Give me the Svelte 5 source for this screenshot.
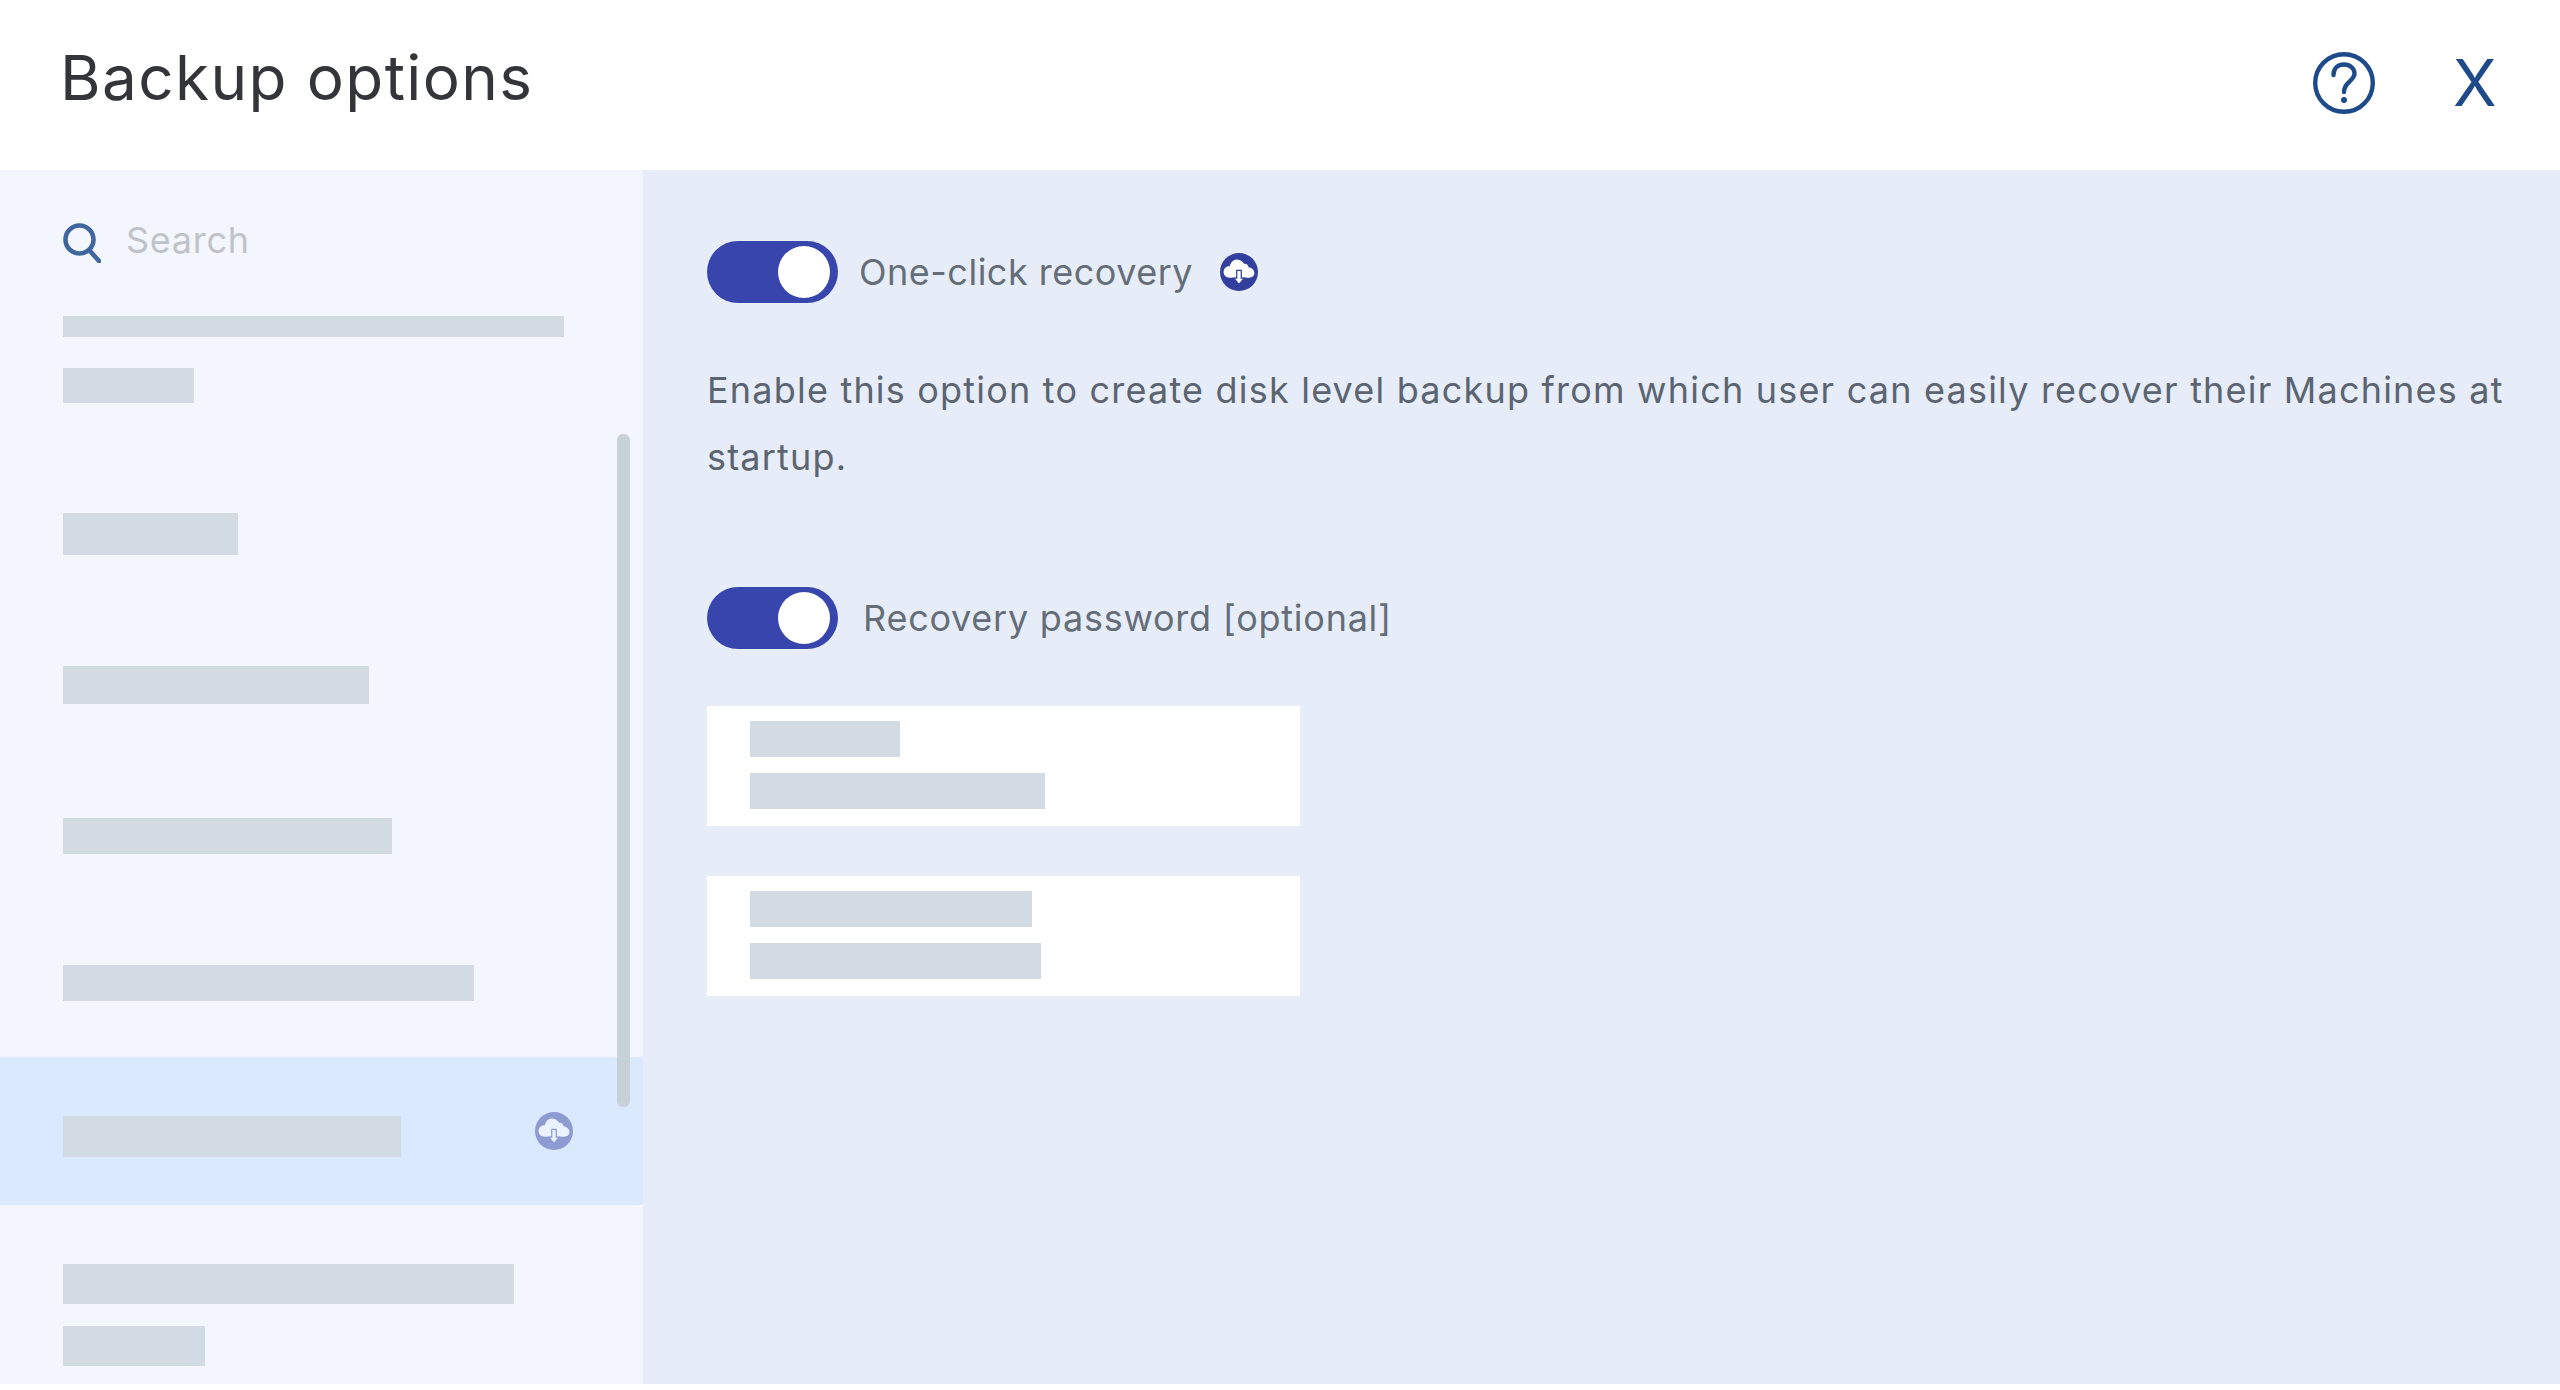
<script>
  const rows = [
    { pt: 0, bars: [{ w: 501, h: 21 }, { w: 131, h: 35 }] },
    { pt: 110, bars: [{ w: 175, h: 42 }] },
    { pt: 111, bars: [{ w: 306, h: 38 }] },
    { pt: 114, bars: [{ w: 329, h: 36 }] },
    { pt: 111, bars: [{ w: 411, h: 36 }] }
  ];

  const cards = [
    [{ w: 150, h: 36 }, { w: 295, h: 36 }],
    [{ w: 282, h: 36 }, { w: 291, h: 36 }]
  ];
</script>

{#snippet cloud()}
  <svg class="cloud" viewBox="0 0 37 37" aria-hidden="true">
    <circle cx="18.5" cy="18.5" r="18.5" fill="#323f9f" />
    <path d="M9.5 24C6 24 3.5 21.5 3.5 18.5 3.5 15 6.5 12.5 9.5 13 10.5 8.5 14 6 17.5 6.5 20.5 6.8 22.5 8.5 23.5 10.5 25.5 10 27.5 11.5 28 14 31 14 33.5 16.5 33.5 19.5 33.5 22.3 31 24 28.5 24Z" fill="#fff" />
    <path d="M16.3 17h4.4v7.5h3L18.5 30.5 13.3 24.5h3Z" fill="#fff" stroke="#323f9f" stroke-width="1.2" />
  </svg>
{/snippet}

{#snippet bar(b)}
  <div class="bar" style="width:{b.w}px;height:{b.h}px"></div>
{/snippet}

<main>
  <header>
    <h1>Backup options</h1>
    <div class="actions">
      <svg class="help" viewBox="0 0 62 62" aria-label="Help">
        <circle cx="31" cy="31" r="28.8" fill="none" stroke="#1f4a8a" stroke-width="4.4" />
        <path d="M20.5 23C20.5 15.5 25.5 12.5 31 12.5 37 12.5 41.5 16.5 41.5 21.5 41.5 29 31 29.5 31 40" fill="none" stroke="#1f4a8a" stroke-width="4.4" stroke-linecap="round" />
        <circle cx="31" cy="48" r="3" fill="#1f4a8a" />
      </svg>
      <span class="close">X</span>
    </div>
  </header>

  <div class="body">
    <aside>
      <div class="search">
        <svg viewBox="0 0 38 40" aria-hidden="true">
          <circle cx="16.5" cy="16.5" r="14" fill="none" stroke="#3f669f" stroke-width="4.6" />
          <path d="M27 28l9 10" fill="none" stroke="#3f669f" stroke-width="4.6" stroke-linecap="round" />
        </svg>
        <span>Search</span>
      </div>

      <div class="list">
        {#each rows as row}
          <div class="row" style="padding-top:{row.pt}px">
            {#each row.bars as b}
              {@render bar(b)}
            {/each}
          </div>
        {/each}

        <div class="row selected">
          {@render bar({ w: 338, h: 41 })}
          <span class="faded">{@render cloud()}</span>
        </div>

        <div class="row last">
          {@render bar({ w: 451, h: 40 })}
          {@render bar({ w: 142, h: 40 })}
        </div>
      </div>

      <div class="scrollbar"></div>
    </aside>

    <section>
      <div class="toggle-line first">
        <span class="switch"><span class="knob"></span></span>
        <span class="label">One-click recovery</span>
        {@render cloud()}
      </div>

      <p>Enable this option to create disk level backup from which user can easily recover their Machines at startup.</p>

      <div class="toggle-line second">
        <span class="switch"><span class="knob"></span></span>
        <span class="label">Recovery password [optional]</span>
      </div>

      {#each cards as card}
        <div class="card">
          {#each card as b}
            {@render bar(b)}
          {/each}
        </div>
      {/each}
    </section>
  </div>
</main>

<style>
  :global(body) {
    margin: 0;
    background: #ffffff;
    font-family: Inter, "Open Sans", sans-serif;
  }

  main {
    display: flex;
    flex-direction: column;
    height: 1384px;
    overflow: hidden;
  }

  /* HEADER */
  header {
    flex: 0 0 170px;
    box-sizing: border-box;
    display: flex;
    justify-content: space-between;
    padding: 0 67px 0 60px;
    background: #ffffff;
  }

  h1 {
    margin: 43px 0 0;
    font-size: 62px;
    line-height: 70px;
    font-weight: 400;
    color: #333538;
    letter-spacing: 1.4px;
  }

  .actions {
    display: flex;
    gap: 82px;
    padding-top: 52px;
  }

  .help {
    width: 62px;
    height: 62px;
  }

  .close {
    width: 36px;
    margin-top: -4px;
    font-size: 64px;
    line-height: 70px;
    font-weight: 400;
    color: #1f4a8a;
    text-align: center;
    transform: translateX(-4px);
  }

  .body {
    flex: 1;
    display: flex;
    min-height: 0;
  }

  /* SIDEBAR */
  aside {
    position: relative;
    flex: 0 0 643px;
    background: #f4f6fe;
    overflow: hidden;
  }

  .search {
    display: flex;
    align-items: center;
    gap: 25px;
    height: 40px;
    padding: 53px 0 53px 63px;
  }

  .search svg {
    width: 38px;
    height: 40px;
  }

  .search span {
    margin-top: -6px;
    font-size: 36px;
    color: #bfc3c9;
    letter-spacing: 0.7px;
  }

  .row {
    display: flex;
    flex-direction: column;
    gap: 31px;
    padding-left: 63px;
  }

  .row.selected {
    position: relative;
    margin-top: 56px;
    padding-top: 59px;
    padding-bottom: 48px;
    background: #dae9fd;
  }

  .row.last {
    gap: 22px;
    padding-top: 59px;
  }

  .bar {
    background: #d2dbe3;
  }

  .faded {
    position: absolute;
    left: 535px;
    top: 55px;
    line-height: 0;
    opacity: 0.45;
  }

  .cloud {
    width: 38px;
    height: 38px;
  }

  .scrollbar {
    position: absolute;
    left: 617px;
    top: 264px;
    width: 13px;
    height: 673px;
    border-radius: 6px;
    background: #c8d0d8;
  }

  /* MAIN PANEL */
  section {
    flex: 1;
    box-sizing: border-box;
    padding: 71px 20px 0 64px;
    background: #e6edf9;
    min-width: 0;
  }

  .toggle-line {
    display: flex;
    align-items: center;
  }

  .switch {
    position: relative;
    display: block;
    width: 131px;
    height: 62px;
    border-radius: 31px;
    background: #3845ad;
  }

  .knob {
    position: absolute;
    top: 5px;
    right: 8px;
    width: 52px;
    height: 52px;
    border-radius: 50%;
    background: #ffffff;
  }

  .label {
    font-size: 36px;
    color: #656d78;
  }

  .first .label {
    margin: 0 27px 0 21px;
    letter-spacing: 0.5px;
  }

  .second .label {
    margin-left: 25px;
    letter-spacing: 0.75px;
  }

  p {
    margin: 54px 0 0;
    font-size: 36px;
    line-height: 67px;
    letter-spacing: 1.2px;
    color: #5b6470;
  }

  .second {
    margin-top: 96px;
  }

  .card {
    display: flex;
    flex-direction: column;
    gap: 16px;
    width: 593px;
    height: 120px;
    box-sizing: border-box;
    padding: 15px 0 0 43px;
    margin-top: 50px;
    background: #ffffff;
  }

  .second + .card {
    margin-top: 57px;
  }
</style>
